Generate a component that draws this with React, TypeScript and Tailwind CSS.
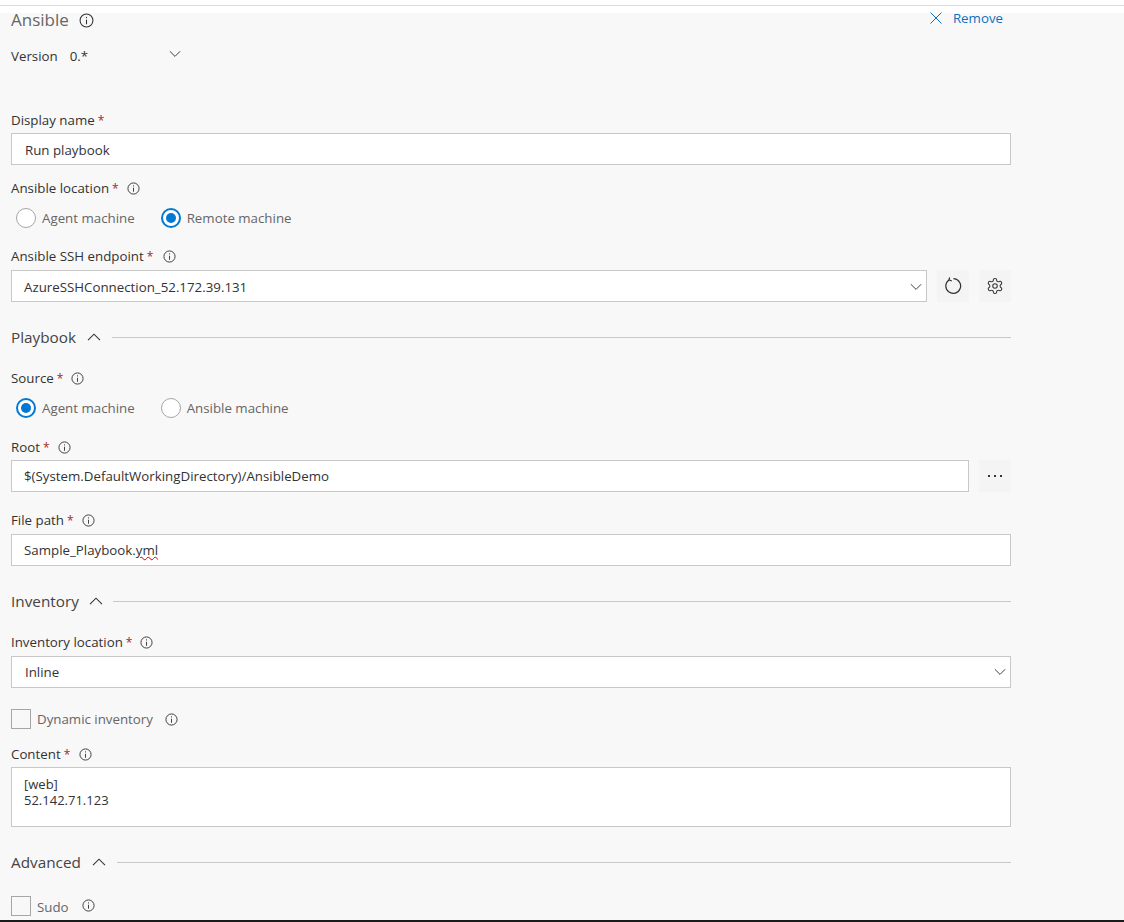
import React from "react";

const Info = ({ size = 14 }: { size?: number }) => (
  <svg width={size} height={size} viewBox="0 0 14 14" fill="none" stroke="#333" strokeWidth="1" className="shrink-0">
    <circle cx="7" cy="7" r="6" />
    <path d="M7 6.2V10.5" />
    <path d="M7 3.6V4.8" />
  </svg>
);

const Chevron = ({ up = false, w = 14, color = "#333" }: { up?: boolean; w?: number; color?: string }) => (
  <svg width={w} height="8" viewBox="0 0 14 8" fill="none" stroke={color} strokeWidth="1.1" className="shrink-0">
    <path d={up ? "M1 7.2L7 1.2L13 7.2" : "M1 .8L7 6.8L13 .8"} />
  </svg>
);

const Label = ({ text, info = true, gap = "ml-[8px]", cls }: { text: string; info?: boolean; gap?: string; cls: string }) => (
  <div className={`flex h-5 items-center text-[#333] ${cls}`}>
    <span>{text}</span>
    <span className="ml-[3px] translate-y-px text-[12px] text-[#a4262c]">*</span>
    {info && <span className={`${gap} flex`}><Info size={13} /></span>}
  </div>
);

const Field = ({ children, cls }: { children: React.ReactNode; cls: string }) => (
  <div className={`flex h-8 items-center border border-[#c8c8c8] bg-white pr-1 text-[#333] ${cls}`}>{children}</div>
);

const Radio = ({ on, text }: { on: boolean; text: string }) => (
  <div className="flex items-center">
    {on ? (
      <span className="flex size-5 items-center justify-center rounded-full border-2 border-[#0078d4] bg-white">
        <span className="size-[10px] rounded-full bg-[#0078d4]" />
      </span>
    ) : (
      <span className="size-5 rounded-full border border-[#a6a6a6] bg-white" />
    )}
    <span className="ml-[6px] text-[#666]">{text}</span>
  </div>
);

const Section = ({ text, cls, chevGap = "ml-[11px]", lineGap = "ml-[11px]" }: { text: string; cls: string; chevGap?: string; lineGap?: string }) => (
  <div className={`flex h-5 items-center ${cls}`}>
    <span className="text-[15.3px] text-[#444]">{text}</span>
    <span className={`${chevGap} flex`}><Chevron up /></span>
    <span className={`h-px flex-1 bg-[#c8c8c8] ${lineGap}`} />
  </div>
);

const Check = ({ text, cls, gap, textCls = "" }: { text: string; cls: string; gap: string; textCls?: string }) => (
  <div className={`flex h-5 items-center ${cls}`}>
    <span className="size-5 border border-[#a6a6a6] bg-[#f8f8f8]" />
    <span className={`ml-[6px] text-[#666] ${textCls}`}>{text}</span>
    <span className={`${gap} flex`}><Info size={13} /></span>
  </div>
);

const IconBtn = ({ children, cls }: { children: React.ReactNode; cls: string }) => (
  <div className={`flex size-8 shrink-0 items-center justify-center bg-[#f4f4f4] ${cls}`}>{children}</div>
);

export default function App() {
  return (
    <div className="flex h-[922px] w-[1124px] flex-col overflow-hidden bg-white font-['Open_Sans','Liberation_Sans',sans-serif] text-[13.3px] leading-5">
      <div className="h-[13px] pt-[5px]">
        <div className="h-px bg-[#dcdcdc]" />
      </div>
      <div className="flex-1 bg-[#f8f8f8] pl-[11px]">
        <div className="w-[1000px]">
          <div className="flex h-[14px] items-center justify-between">
            <div className="flex items-center">
              <span className="text-[17px] text-[#666]">Ansible</span>
              <span className="ml-[10px] flex"><Info size={15} /></span>
            </div>
            <div className="mr-2 flex -translate-y-[2px] items-center text-[#106ebe]">
              <svg width="12" height="12" viewBox="0 0 12 12" fill="none" stroke="#106ebe" strokeWidth="1"><path d="M.5.5L11.5 11.5M11.5.5L.5 11.5" /></svg>
              <span className="ml-[11px]">Remove</span>
            </div>
          </div>

          <div className="mt-[19px] flex h-5 items-center text-[#333]">
            <span>Version</span>
            <span className="ml-3">0.*</span>
            <span className="ml-[81px] flex -translate-y-[2px]"><Chevron w={12} /></span>
          </div>

          <Label text="Display name" info={false} cls="mt-[44px]" />
          <Field cls="mt-[3px] pl-[13px] pt-px">Run playbook</Field>

          <Label text="Ansible location" cls="mt-[13px]" />
          <div className="ml-[5px] mt-[10px] flex h-5 gap-[26px]">
            <Radio on={false} text="Agent machine" />
            <Radio on text="Remote machine" />
          </div>

          <Label text="Ansible SSH endpoint" gap="ml-[10px]" cls="mt-[18px]" />
          <div className="mt-1 flex">
            <Field cls="flex-1 justify-between pl-3 pt-px">
              <span>AzureSSHConnection_52.172.39.131</span>
              <Chevron w={12} color="#333" />
            </Field>
            <IconBtn cls="ml-[10px]">
              <svg width="18" height="18" viewBox="0 0 18 18" fill="none" stroke="#333" strokeWidth="1.2">
                <path d="M5 2.9A7.4 7.4 0 1 0 9.5 1.6" />
                <path d="M5.6 .4L5 2.9L7.8 4" />
              </svg>
            </IconBtn>
            <IconBtn cls="ml-[10px]">
              <svg width="18" height="18" viewBox="0 0 24 24" fill="none" stroke="#333" strokeWidth="1.4">
                <path d="M12.22 2h-.44a2 2 0 0 0-2 2v.18a2 2 0 0 1-1 1.73l-.43.25a2 2 0 0 1-2 0l-.15-.08a2 2 0 0 0-2.73.73l-.22.38a2 2 0 0 0 .73 2.73l.15.1a2 2 0 0 1 1 1.72v.51a2 2 0 0 1-1 1.74l-.15.09a2 2 0 0 0-.73 2.73l.22.38a2 2 0 0 0 2.73.73l.15-.08a2 2 0 0 1 2 0l.43.25a2 2 0 0 1 1 1.73V20a2 2 0 0 0 2 2h.44a2 2 0 0 0 2-2v-.18a2 2 0 0 1 1-1.73l.43-.25a2 2 0 0 1 2 0l.15.08a2 2 0 0 0 2.73-.73l.22-.39a2 2 0 0 0-.73-2.73l-.15-.08a2 2 0 0 1-1-1.74v-.5a2 2 0 0 1 1-1.74l.15-.09a2 2 0 0 0 .73-2.73l-.22-.38a2 2 0 0 0-2.73-.73l-.15.08a2 2 0 0 1-2 0l-.43-.25a2 2 0 0 1-1-1.73V4a2 2 0 0 0-2-2z" />
                <circle cx="12" cy="12" r="3" />
              </svg>
            </IconBtn>
          </div>

          <Section text="Playbook" cls="mt-[25px]" />

          <Label text="Source" cls="mt-[21px]" />
          <div className="ml-[5px] mt-[10px] flex h-5 gap-[26px]">
            <Radio on text="Agent machine" />
            <Radio on={false} text="Ansible machine" />
          </div>

          <Label text="Root" cls="mt-[19px]" />
          <div className="mt-[3px] flex">
            <Field cls="flex-1 pl-3">$(System.DefaultWorkingDirectory)/AnsibleDemo</Field>
            <IconBtn cls="ml-[10px]">
              <svg width="16" height="4" viewBox="0 0 16 4" fill="#333">
                <rect x="1" y="1" width="2" height="2" />
                <rect x="7" y="1" width="2" height="2" />
                <rect x="13" y="1" width="2" height="2" />
              </svg>
            </IconBtn>
          </div>

          <Label text="File path" cls="mt-[18px]" />
          <Field cls="mt-1 pl-3">
            <span>Sample_Playbook.<span className="underline decoration-[#d00] decoration-wavy decoration-1">yml</span></span>
          </Field>

          <Section text="Inventory" cls="mt-[25px]" chevGap="ml-[10px]" lineGap="ml-[10px]" />

          <Label text="Inventory location" cls="mt-[21px]" />
          <Field cls="mt-1 justify-between pl-[13px]">
            <span>Inline</span>
            <Chevron w={12} color="#333" />
          </Field>

          <Check text="Dynamic inventory" gap="ml-[12px]" cls="mt-[21px]" />

          <Label text="Content" gap="ml-[9px]" cls="mt-[15px]" />
          <div className="mt-[3px] h-[60px] border border-[#c8c8c8] bg-white pl-3 pt-[8px] text-[13px] leading-[16px] text-[#333]">
            <div>[web]</div>
            <div>52.142.71.123</div>
          </div>

          <Section text="Advanced" cls="mt-[25px]" />

          <Check text="Sudo" gap="ml-[13px] translate-y-[-1px]" textCls="translate-y-px" cls="mt-6" />
        </div>
      </div>
      <div className="h-[2px] bg-[#1a1a1a]" />
    </div>
  );
}
